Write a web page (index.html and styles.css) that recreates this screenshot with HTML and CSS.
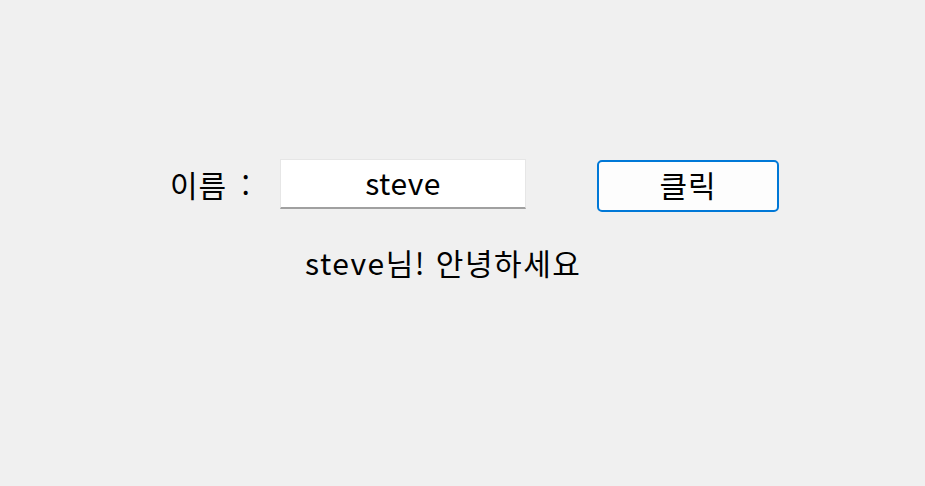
FILE: index.html
```html
<!DOCTYPE html>
<html lang="ko">
<head>
  <meta charset="UTF-8" />
  <title>이름</title>
  <link rel="stylesheet" href="styles.css">
</head>
<body>
  <div class="container">
    <div class="form-row">
      <label class="name-label" for="name">이름 :</label>
      <input class="name-input" type="text" id="name" value="steve">
      <button class="click-btn" type="button">클릭</button>
    </div>
    <p class="greeting">steve님! 안녕하세요</p>
  </div>
</body>
</html>
```

FILE: styles.css
```css
body {
  margin: 0;
  background-color: #f0f0f0;
  font-family: "Noto Sans CJK KR", "DejaVu Sans", sans-serif;
  color: #000;
}

.container {
  padding-top: 159px;
}

.form-row {
  display: flex;
  align-items: flex-start;
  margin-left: 170px;
}

.name-label {
  width: 110px;
  font-size: 30px;
  line-height: 50px;
  letter-spacing: 1px;
  word-spacing: 5px;
}

.name-input {
  width: 246px;
  height: 50px;
  box-sizing: border-box;
  border: 1px solid #e6e6e6;
  border-bottom: 2px solid #a0a0a0;
  background: #fff;
  text-align: center;
  font-family: inherit;
  font-size: 30px;
  letter-spacing: 0.5px;
  padding: 0 0 4px;
  outline: none;
}

.click-btn {
  margin: 1px 0 0 71px;
  width: 182px;
  height: 52px;
  box-sizing: border-box;
  border: 2px solid #0078d7;
  border-radius: 5px;
  background: #fdfdfd;
  color: #000;
  font-family: inherit;
  font-size: 30px;
  letter-spacing: 1px;
  line-height: 1;
  padding: 0 0 4px;
}

.greeting {
  margin: 30px 0 0 305px;
  font-size: 30px;
  line-height: 40px;
  letter-spacing: 1.5px;
}
```
